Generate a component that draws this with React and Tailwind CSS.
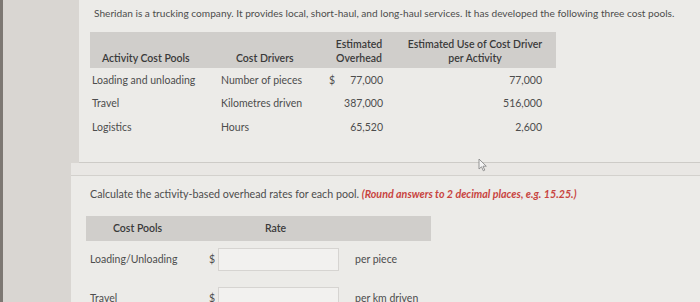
import React from "react";

const font = { fontFamily: "Lato, 'Open Sans', sans-serif" };

function Cursor() {
  return (
    <svg className="absolute left-[478px] top-[158px]" width="10" height="14" viewBox="0 0 10 14">
      <path d="M1 1 L1 11 L3.5 8.8 L5.3 12.8 L6.8 12.1 L5 8.2 L8.3 8.2 Z" fill="#f4f4f4" stroke="#8a8a8a" strokeWidth="0.9" strokeLinejoin="round" />
    </svg>
  );
}

export default function App() {
  return (
    <div className="relative w-[700px] h-[302px] overflow-hidden flex bg-[#d9d6d2] text-[#4d4d4d]" style={font}>
      <div className="w-[3px] h-full bg-[#7d7873] shrink-0" />
      <div className="flex-1 flex flex-col ml-[68px]">
        {/* Panel 1 */}
        <div className="shrink-0 ml-[8px] h-[163px] bg-[#ecebe8] border-b border-[#cdcbc7] pl-[15px] pt-[6px]">
          <p className="text-[10.15px] leading-[14px] whitespace-nowrap">
            Sheridan is a trucking company. It provides local, short-haul, and long-haul services. It has developed the following three cost pools.
          </p>
          <div className="mt-[12px] -ml-[4px] w-[466px] text-[10.5px]">
            <div className="grid grid-cols-[124px_110px_70px_162px] items-end bg-[#d0cecb] h-[36px] pb-[3px] font-semibold text-[#3a3a3a] leading-[14px]">
              <div className="pl-[12px]">Activity Cost Pools</div>
              <div className="pl-[22px]">Cost Drivers</div>
              <div className="text-center">Estimated<br />Overhead</div>
              <div className="text-center">Estimated Use of Cost Driver<br />per Activity</div>
            </div>
            {[
              ["Loading and unloading", "Number of pieces", true, "77,000", "77,000"],
              ["Travel", "Kilometres driven", false, "387,000", "516,000"],
              ["Logistics", "Hours", false, "65,520", "2,600"],
            ].map(([a, b, d, c, e]) => (
              <div key={a} className="grid grid-cols-[124px_110px_70px_162px] items-center h-[23.5px] leading-[14px]">
                <div className="pl-[2px]">{a}</div>
                <div className="pl-[7px]">{b}</div>
                <div className="flex justify-between pl-[5px] pr-[11px]">
                  <span>{d ? "$" : ""}</span>
                  <span>{c}</span>
                </div>
                <div className="text-right pr-[14px]">{e}</div>
              </div>
            ))}
          </div>
        </div>
        {/* Gap band */}
        <div className="shrink-0 h-[13px] bg-[#e9e7e4] border-b border-[#d3d1cd]" />
        {/* Panel 2 */}
        <div className="flex-1 bg-[#ecebe8] pl-[15px] pt-[11px]">
          <p className="ml-[4px] text-[10.7px] leading-[14px] whitespace-nowrap">
            Calculate the activity-based overhead rates for each pool.{" "}
            <span className="italic font-bold text-[#c8443f]">(Round answers to 2 decimal places, e.g. 15.25.)</span>
          </p>
          <div className="mt-[15px] w-[345px] h-[25px] bg-[#d0cecb] flex items-center font-semibold text-[#3a3a3a] text-[10.5px]">
            <div className="w-[179px] pl-[27px]">Cost Pools</div>
            <div>Rate</div>
          </div>
          <div className="mt-[7px] flex flex-col gap-[16px] text-[10.5px]">
            {[
              ["Loading/Unloading", "per piece"],
              ["Travel", "per km driven"],
            ].map(([a, u]) => (
              <div key={a} className="flex items-center h-[23px]">
                <div className="w-[123px] pl-[4px]">{a}</div>
                <div className="w-[9px]">$</div>
                <div className="w-[121px] h-[23px] border border-[#d6d4d1] bg-[#f2f1ef]" />
                <div className="ml-[16px]">{u}</div>
              </div>
            ))}
          </div>
        </div>
      </div>
      <Cursor />
    </div>
  );
}
